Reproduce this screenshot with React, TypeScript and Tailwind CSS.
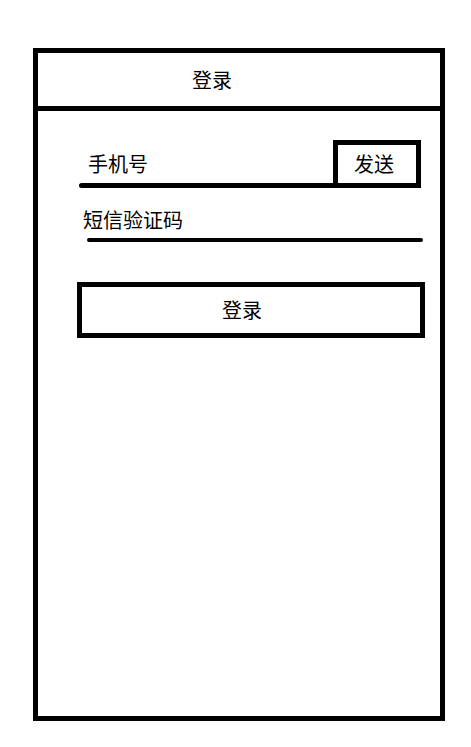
export default function App() {
  return (
    <div className="min-h-[747px] w-[471px] bg-white pl-[33px] pt-[48px] font-['Noto_Sans_CJK_SC',sans-serif] text-[20px] text-black">
      <div className="flex h-[673px] w-[412px] flex-col border-[5px] border-black">
        {/* Header */}
        <div className="flex h-[58px] shrink-0 items-center border-b-[5px] border-black pl-[154px]">
          <span className="leading-[28px]">登录</span>
        </div>

        {/* Form */}
        <div className="flex flex-col pt-[29px]">
          <div className="ml-[41px] flex items-end">
            <div className="flex w-[254px] flex-col">
              <span className="pb-[5px] pl-[9px] leading-[28px]">手机号</span>
              <div className="h-[5px] rounded-l-full bg-black" />
            </div>
            <button className="flex h-[48px] w-[88px] items-center justify-center border-[5px] border-black pr-[6px] leading-[28px]">
              发送
            </button>
          </div>

          <span className="ml-[45px] mt-[18px] leading-[28px]">短信验证码</span>
          <div className="ml-[49px] mt-[4px] h-[4px] w-[336px] rounded-full bg-black" />

          <button className="ml-[39px] mt-[40px] flex h-[56px] w-[348px] items-center justify-center border-[5px] border-black pr-[18px] leading-[28px]">
            登录
          </button>
        </div>
      </div>
    </div>
  )
}
